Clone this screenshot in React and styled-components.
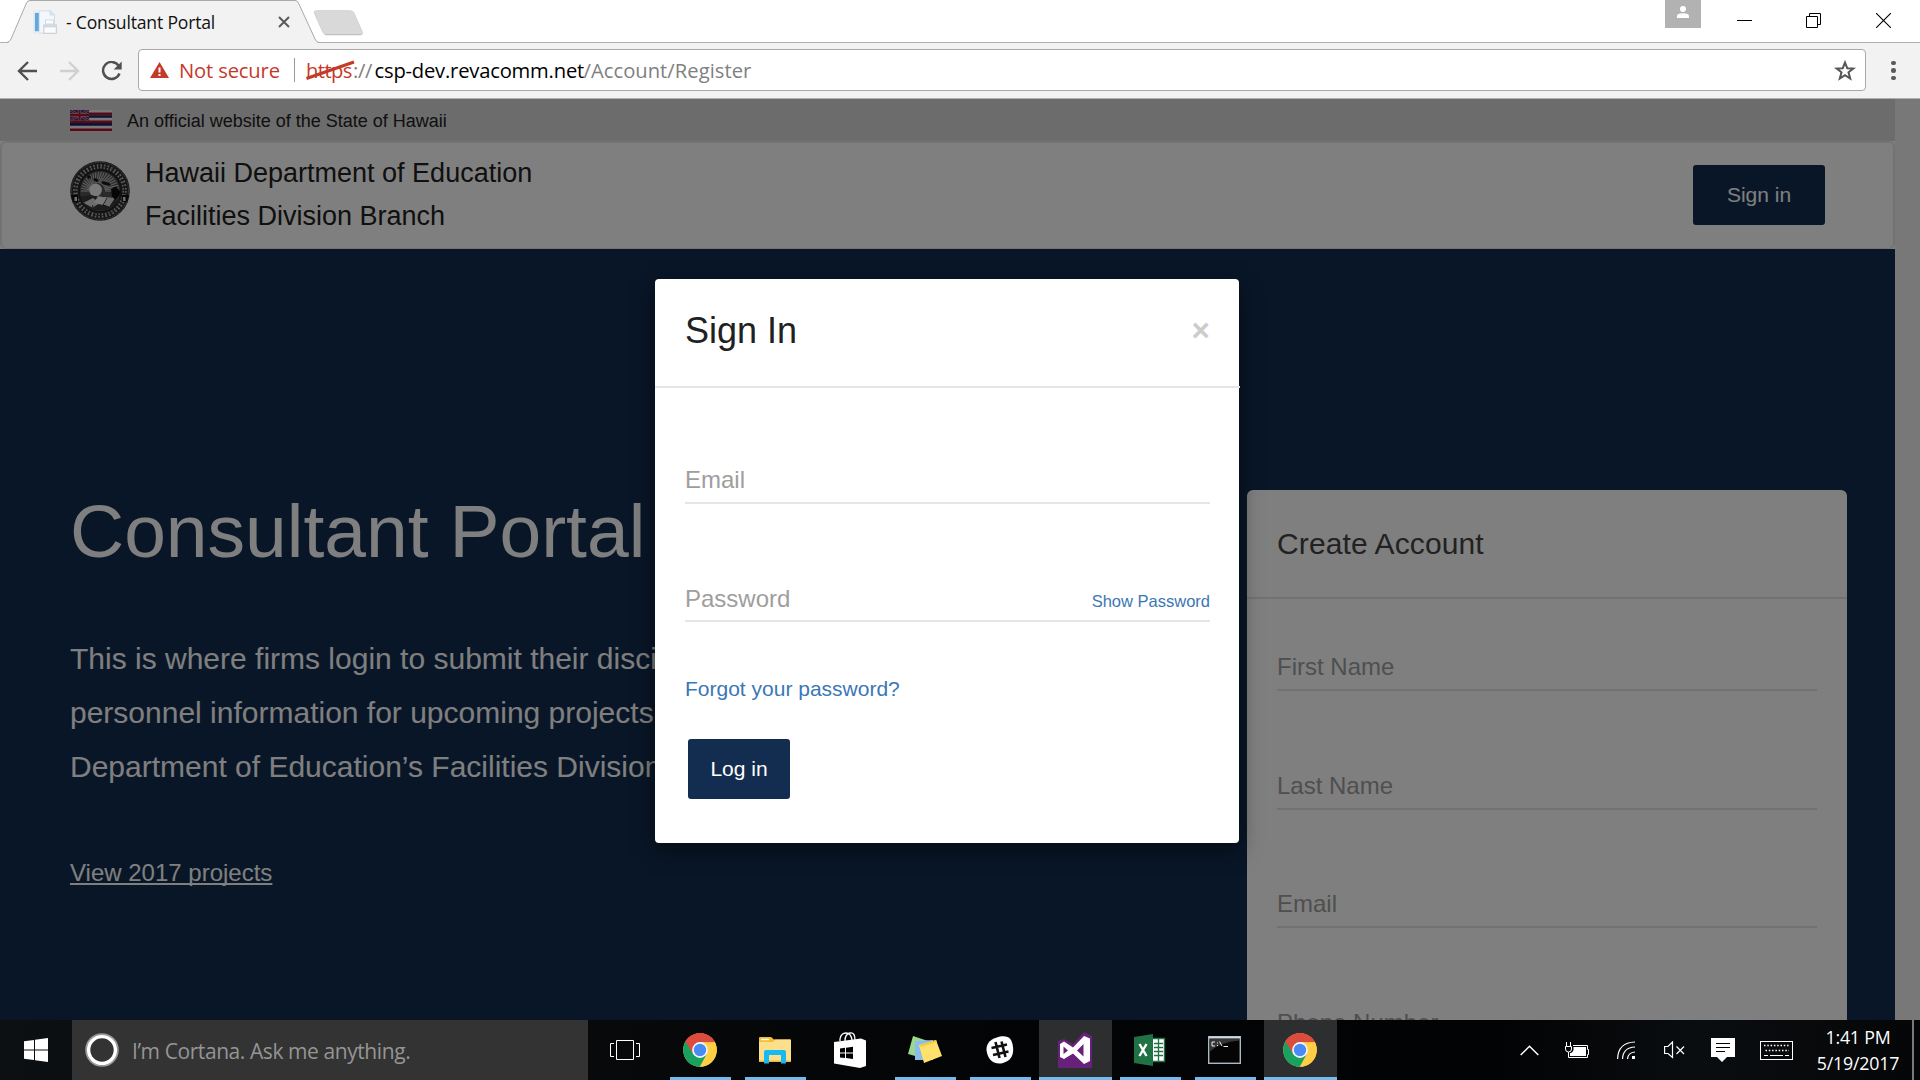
import React from "react";
import styled, { createGlobalStyle } from "styled-components";

const GlobalStyle = createGlobalStyle`
  *, *::before, *::after { box-sizing: border-box; }
  body { margin: 0; background: #000; font-family: "Liberation Sans", Arial, sans-serif; overflow: hidden; }
  h1, h2, h3, p { margin: 0; font-weight: 400; }
  button { font-family: inherit; border: 0; padding: 0; background: none; }
  svg { display: block; flex: none; }
`;

const uiFont = `"Open Sans", "Noto Sans", sans-serif`;

const Screen = styled.div`
  width: 1920px;
  height: 1080px;
  display: flex;
  flex-direction: column;
  overflow: hidden;
`;

/* ---------- browser frame ---------- */
const TabStrip = styled.div`
  height: 43px;
  flex: none;
  display: flex;
  align-items: flex-start;
  background: #fff;
  border-bottom: 1px solid #b0b0b0;
`;
const Tab = styled.div`
  position: relative;
  width: 312px;
  height: 43px;
  margin-left: 7px;
  padding: 1px 29px 0 26px;
  display: flex;
  align-items: center;
`;
const TabShape = styled.svg`
  position: absolute;
  left: 0;
  top: 0;
`;
const TabTitle = styled.span`
  position: relative;
  flex: 1;
  margin-left: 9px;
  font: 17.6px/24px ${uiFont};
  letter-spacing: -0.2px;
  color: #111;
  white-space: nowrap;
`;
const Above = styled.span`
  position: relative;
  display: block;
`;
const NewTab = styled.svg`
  margin: 10px 0 0 -6px;
`;
const WindowButtons = styled.div`
  margin-left: auto;
  height: 42px;
  display: flex;
  align-items: flex-start;
`;
const Profile = styled.div`
  width: 36px;
  height: 28px;
  background: #b2b2b2;
  display: flex;
  justify-content: center;
  padding-top: 6px;
  margin-right: 8px;
`;
const WindowButton = styled.div`
  width: ${(p) => p.$w}px;
  height: 41px;
  display: flex;
  align-items: center;
  justify-content: center;
`;

const Toolbar = styled.div`
  height: 56px;
  flex: none;
  display: flex;
  align-items: center;
  padding: 0 24px 0 17px;
  background: #f2f2f2;
  border-bottom: 1px solid #b0b0b0;
`;
const NavIcons = styled.div`
  width: 121px;
  display: flex;
  gap: 21px;
`;
const Omnibox = styled.div`
  width: 1728px;
  height: 42px;
  margin-top: -1px;
  display: flex;
  align-items: center;
  padding: 0 9px 0 11px;
  background: #fff;
  border: 1px solid #a9a9a9;
  border-radius: 4px;
  font: 20.2px/28px ${uiFont};
  white-space: nowrap;
`;
const NotSecure = styled.span`
  width: 105px;
  margin-left: 10px;
  color: #c53929;
  letter-spacing: -0.15px;
`;
const Separator = styled.span`
  width: 1px;
  height: 24px;
  margin: 0 11px 0 10px;
  background: #9b9b9b;
`;
const Scheme = styled.span`
  position: relative;
  color: #c53929;
  width: 47px;
  letter-spacing: -0.6px;
`;
const Strike = styled.svg`
  position: absolute;
  left: 0;
  top: 3px;
`;
const UrlPart = styled.span`
  color: ${(p) => (p.$strong ? "#000" : "#808080")};
  width: ${(p) => p.$w}px;
  letter-spacing: ${(p) => p.$ls}px;
`;
const StarSlot = styled.span`
  margin-left: auto;
`;
const MenuDots = styled.div`
  margin-left: auto;
  display: flex;
  flex-direction: column;
  gap: 3px;
  span { width: 4.6px; height: 4.6px; border-radius: 50%; background: #5a5a5a; }
`;

/* ---------- page ---------- */
const Viewport = styled.main`
  position: relative;
  height: 921px;
  flex: none;
  display: flex;
  overflow: hidden;
`;
const Page = styled.div`
  width: 1895px;
  display: flex;
  flex-direction: column;
  background: #132d50;
`;
const Scrollbar = styled.div`
  width: 25px;
  background: #f0f0f0;
`;
const OfficialBar = styled.div`
  height: 42px;
  flex: none;
  display: flex;
  align-items: center;
  gap: 15px;
  padding-left: 70px;
  background: #d8d8d8;
  font-size: 18px;
  line-height: 24px;
  color: #212121;
`;
const OfficialText = styled.span`
  padding-top: 2px;
`;
const NavBacking = styled.div`
  height: 108px;
  flex: none;
  background: #fff;
`;
const NavBar = styled.header`
  height: 108px;
  display: flex;
  align-items: center;
  padding: 0 68px 2px;
  background: #fff;
  border: 2px solid #e7e7e7;
  border-bottom-width: 1px;
  border-radius: 6px;
`;
const AgencyName = styled.div`
  margin: 0 0 0 15px;
  font-size: 27px;
  line-height: 43px;
  color: #212121;
  flex: 1;
`;
const Seal = styled.div`
  margin-top: -8px;
`;
const PrimaryButton = styled.button`
  width: ${(p) => p.$w}px;
  height: 60px;
  border-radius: 3px;
  background: #132d50;
  color: #fff;
  font-size: 21px;
`;
const Hero = styled.section`
  flex: 1;
  min-height: 0;
  display: grid;
  grid-template-columns: 1177px 600px;
  padding: 0 0 0 70px;
  overflow: hidden;
  color: #fff;
`;
const Intro = styled.div`
  padding-top: 237px;
  white-space: nowrap;
`;
const HeroTitle = styled.h1`
  font-size: 75px;
  line-height: 90px;
`;
const Lead = styled.p`
  margin-top: 56px;
  font-size: 30px;
  line-height: 54px;
`;
const ProjectsLink = styled.a`
  display: inline-block;
  margin-top: 62px;
  font-size: 24px;
  line-height: 34px;
  text-decoration: underline;
  text-decoration-thickness: 2px;
  text-underline-offset: 2px;
  text-decoration-skip-ink: none;
`;
const Card = styled.div`
  margin-top: 241px;
  height: 620px;
  background: #fff;
  border-radius: 6px;
`;
const CardHeader = styled.div`
  height: 109px;
  display: flex;
  align-items: center;
  padding: 0 30px;
  border-bottom: 2px solid #e5e5e5;
  color: #444;
  font-size: 30px;
  letter-spacing: 0.12px;
`;
const CardFields = styled.div`
  padding: 46px 30px 0;
  display: flex;
  flex-direction: column;
  gap: 72.5px;
`;
const Field = styled.div`
  height: 46px;
  flex: none;
  display: flex;
  align-items: baseline;
  justify-content: space-between;
  border-bottom: 2px solid #e5e5e5;
  font-size: 24px;
  line-height: ${(p) => p.$lh || 44}px;
  color: #9e9e9e;
`;

/* ---------- sign-in dialog ---------- */
const Backdrop = styled.div`
  position: absolute;
  inset: 0;
  background: rgba(0, 0, 0, 0.5);
`;
const Dialog = styled.div`
  position: absolute;
  left: 655px;
  top: 180px;
  width: 584px;
  height: 564px;
  background: #fff;
  border-radius: 4px;
  box-shadow: 0 7px 22px rgba(0, 0, 0, 0.5);
`;
const DialogHeader = styled.div`
  width: 585px;
  height: 109px;
  display: flex;
  align-items: center;
  justify-content: space-between;
  padding: 0 30px 4px 30px;
  border-bottom: 2px solid #e5e5e5;
`;
const DialogTitle = styled.h2`
  font-size: 36px;
  line-height: 44px;
  color: #212121;
`;
const CloseButton = styled.button`
  margin-bottom: 2px;
  font-size: 31.5px;
  line-height: 32px;
  font-weight: 700;
  color: #ccc;
`;
const DialogBody = styled.div`
  padding: 70px 29px 0 30px;
  display: flex;
  flex-direction: column;
  align-items: stretch;
`;
const Gap = styled.div`
  height: ${(p) => p.$h}px;
`;
const TextLink = styled.a`
  color: #3a77b5;
  font-size: ${(p) => p.$size}px;
  line-height: 30px;
`;
const Actions = styled.div`
  padding: 35px 0 0 3px;
`;

/* ---------- taskbar ---------- */
const Taskbar = styled.footer`
  height: 60px;
  flex: none;
  display: flex;
  background: linear-gradient(90deg, #0c1013 0, #07090b 600px, #030405 1000px, #020304 1500px, #0a0d10 1700px, #050607 1920px);
`;
const StartButton = styled.div`
  width: 72px;
  display: flex;
  align-items: center;
  justify-content: center;
`;
const SearchBox = styled.div`
  width: 516px;
  display: flex;
  align-items: center;
  gap: 13px;
  padding-left: 13px;
  background: #333;
  color: #959595;
  font: 21px/28px ${uiFont};
  letter-spacing: -0.42px;
`;
const SearchHint = styled.span`
  padding-top: 2px;
`;
const Apps = styled.div`
  display: grid;
  grid-template-columns: repeat(10, 75px);
`;
const AppSlot = styled.div`
  display: flex;
  align-items: center;
  justify-content: center;
  width: ${(p) => (p.$active ? 73 : 61)}px;
  justify-self: center;
  padding-right: 2px;
  background: ${(p) => (p.$active ? "#2d2e2f" : "transparent")};
  border-top: 3px solid transparent;
  border-bottom: 3px solid ${(p) => (p.$open ? "#76b9ed" : "transparent")};
  border-top-color: ${(p) => (p.$active ? "#2d2e2f" : "transparent")};
`;
const Tray = styled.div`
  margin-left: auto;
  display: flex;
  align-items: center;
`;
const TrayIcon = styled.div`
  width: ${(p) => p.$w}px;
  display: flex;
  justify-content: center;
`;
const Clock = styled.div`
  width: 108px;
  text-align: center;
  color: #fff;
  font: 17.8px/26px ${uiFont};
  letter-spacing: -0.2px;
  padding-bottom: 1px;
`;
const ShowDesktop = styled.div`
  width: 8px;
  height: 60px;
  border-left: 2px solid #77797a;
`;

/* ---------- drawings ---------- */
const Chrome = ({ id }) => (
  <svg width="34" height="34" viewBox="-17 -17 34 34">
    <clipPath id={id}><circle r="16.8" /></clipPath>
    <g clipPath={`url(#${id})`}>
      <rect x="-17" y="-17" width="34" height="34" fill="#ffce44" />
      <path d="M-17-17H17V-7.8H0L-7 4-17-10Z" fill="#dc4b3e" />
      <path d="M-15.5-10.5-6.9 4 0 7.8 6.9 4 0 18H-18V-10Z" fill="#19a15f" />
      <path d="M0-7.8H17V-17H-10L-14.8-9.5-6.9 4Z" fill="#dc4b3e" />
      <path d="M6.9 4-1 18H18V-7.8H0Z" fill="#ffce44" />
    </g>
    <circle r="7.9" fill="#f4f6f8" />
    <circle r="6.2" fill="#4a8af4" />
  </svg>
);

const Flag = () => (
  <svg width="42" height="21" viewBox="0 0 42 21">
    <rect width="42" height="21" fill="#f2f2f2" />
    <path d="M0 3.9H42M0 11.8H42M0 19.7H42" stroke="#b5122f" strokeWidth="2.6" />
    <path d="M0 6.5H42M0 14.4H42" stroke="#1d2468" strokeWidth="2.6" />
    <rect width="19" height="10.5" fill="#303c86" />
    <path d="M0 0 19 10.5M19 0 0 10.5" stroke="#b8b4cc" strokeWidth="2.2" />
    <path d="M0 0 19 10.5M19 0 0 10.5" stroke="#b5122f" strokeWidth="1.1" />
    <path d="M9.5 0V10.5M0 5.2H19" stroke="#cfc4d2" strokeWidth="3.2" />
    <path d="M9.500 0V10.500M0 5.200H19" stroke="#b5122f" strokeWidth="2.200" />
  </svg>
);

const StateSeal = () => (
  <svg width="60" height="60" viewBox="-30 -30 60 60">
    <circle r="29.8" fill="#2e2e2e" />
    <circle r="28.6" fill="none" stroke="#8a8a8a" strokeWidth=".9" strokeDasharray="1.4 1" />
    <circle r="24.6" fill="none" stroke="#b4b4b4" strokeWidth="4.4" strokeDasharray="1.6 1.9" />
    <circle r="24.6" fill="none" stroke="#2e2e2e" strokeWidth="1" strokeDasharray="3 1.7" />
    <circle r="20.8" fill="#555" stroke="#222" strokeWidth="1.4" />
    <g stroke="#bdbdbd" strokeWidth="1.1">
      {Array.from({ length: 22 }, (_, i) => {
        const a = Math.PI * (1 + i / 21);
        return <line key={i} x1={Math.cos(a) * 8 - 3} y1={Math.sin(a) * 8} x2={Math.cos(a) * 19} y2={Math.sin(a) * 19} />;
      })}
    </g>
    <circle cx="-4.500" cy="-1" r="6.400" fill="#f4f4f4" />
    <path d="M-20 6-10 4 0 6 8 7 20 9 14 15 6 19H-8L-15 15Z" fill="#3a3a3a" />
    <path d="M-17 12-7 7 0 12-8 17ZM4 6 15 7 9 16 0 12Z" fill="#d8d8d8" />
    <path d="M-6 12-2 5 7 7 3 14Z" fill="#f2f2f2" />
    <path d="M-17 12-8 17-7 14M9 16 3 14 7 7" fill="none" stroke="#222" strokeWidth=".8" />
    <path d="M11-2 16-4.500 20.500 1 19 5 15 9 12 5Z" fill="#0c0c0c" />
    <circle cx="-11" cy="-14" r="1.800" fill="#151515" />
    <ellipse cx="-4" cy="-11" rx="2.800" ry="1.700" transform="rotate(20 -4 -11)" fill="#191919" />
    <ellipse cx="6" cy="-7.500" rx="5" ry="1.700" transform="rotate(18 6 -7.500)" fill="#191919" />
    <path d="M-29 4H-22V11H-27ZM29 4H22V11H27Z" fill="#101010" />
    <rect x="-25.500" y="6" width="2.500" height="4" fill="#ddd" /><rect x="23" y="6" width="2.500" height="4" fill="#ddd" />
  </svg>
);

const Favicon = () => (
  <svg width="24" height="24" viewBox="0 0 24 24">
    <path d="M6.5 .8H17L21.5 5V23H6.5Z" fill="#f3f6fa" stroke="#d4dce6" />
    <path d="M17 .8V5H21.5Z" fill="#dfe6ef" stroke="#c9d3df" strokeWidth=".6" />
    <rect x=".5" y="1" width="6" height="22" fill="#f5f5f5" stroke="#dde" strokeWidth=".5" />
    <rect x="1.8" y="2.8" width="4" height="18.5" fill="#5fa9dc" />
    <rect x="12.500" y="10" width="8" height="4" fill="#fafbfd" stroke="#d3dbe6" />
    <rect x="10.8" y="15" width="12.5" height="8.3" fill="#fafbfd" stroke="#c2ccd8" />
    <path d="M11 16.4H23" stroke="#cbd5e2" strokeWidth="1.8" />
  </svg>
);

const BrowserFrame = () => (
  <>
    <TabStrip>
      <Tab>
        <TabShape width="312" height="43">
          <path d="M1 43 1.5 42.5Q3 42 4 39L19.5 3Q20.5.5 23 .5H288Q290.500.5 291.500 3L308 39Q309.500 42 311 42.500L311 43Z" fill="#f2f2f2" />
          <path d="M0 42.500Q2.500 42 4 39L19.500 3Q20.500.5 23 .5H288Q290.500.5 291.500 3L308 39Q309.500 42.500 312 42.500" fill="none" stroke="#a9a9a9" />
        </TabShape>
        <Above><Favicon /></Above>
        <TabTitle>- Consultant Portal</TabTitle>
        <Above>
          <svg width="12" height="12" viewBox="0 0 12 12" stroke="#5a5a5a" strokeWidth="2"><path d="M1 1 11 11M11 1 1 11" /></svg>
        </Above>
      </Tab>
      <NewTab width="51" height="26" viewBox="0 0 51 26">
        <path d="M3.500 .7H37Q40 .7 41 3L49.500 22.500Q50.300 24.600 47.500 24.600H13.500Q11 24.600 10 22.500L1.300 3Q.5.7 3.500.7Z" fill="#d9d9d9" stroke="#d2d2d2" />
        <path d="M12 24.700H48" stroke="#bcbcbc" />
      </NewTab>
      <WindowButtons>
        <Profile>
          <svg width="12" height="12" viewBox="0 0 12 12" fill="#fff"><circle cx="6" cy="3" r="3" /><path d="M0 12V10Q0 7.300 6 7.300T12 10V12Z" /></svg>
        </Profile>
        <WindowButton $w={71}><svg width="15" height="15"><path d="M0 7.500H15" stroke="#000" /></svg></WindowButton>
        <WindowButton $w={67}><svg width="15" height="15" fill="none" stroke="#000"><path d="M.5 3.500H11.500V14.500H.5ZM3.500 3.500V.5H14.500V11.500H11.500" /></svg></WindowButton>
        <WindowButton $w={73}><svg width="15" height="15" stroke="#000" strokeWidth="1.100"><path d="M0 0 15 15M15 0 0 15" /></svg></WindowButton>
      </WindowButtons>
    </TabStrip>
    <Toolbar>
      <NavIcons>
        <svg width="21" height="20" viewBox="0 0 21 20" fill="none" stroke="#505050" strokeWidth="2.400"><path d="M20 10H2M11 1 2 10 11 19" /></svg>
        <svg width="21" height="20" viewBox="0 0 21 20" fill="none" stroke="#d0d0d0" strokeWidth="2.400"><path d="M1 10H19M10 1 19 10 10 19" /></svg>
        <svg width="21" height="20" viewBox="0 0 21 20" fill="none" stroke="#505050" strokeWidth="2.400"><path d="M17.500 4.500A8.500 8.500 0 1 0 18.500 12.500" /><path d="M20.700 .5V8.500H12.700Z" fill="#505050" stroke="none" /></svg>
      </NavIcons>
      <Omnibox>
        <svg width="19" height="16" viewBox="0 0 19 16"><path d="M9.500 0 19 16H0Z" fill="#c53929" /><path d="M9.500 5.500V10.500M9.500 12V14" stroke="#fff" strokeWidth="2" /></svg>
        <NotSecure>Not secure</NotSecure>
        <Separator />
        <Scheme>https<Strike width="49" height="22"><path d="M.5 19.500 48 3" stroke="#c53929" strokeWidth="3" /></Strike></Scheme>
        <UrlPart $w={21.5} $ls={-0.4}>://</UrlPart>
        <UrlPart $strong $w={209} $ls={-0.2}>csp-dev.revacomm.net</UrlPart>
        <UrlPart $w={170} $ls={0.03}>/Account/Register</UrlPart>
        <StarSlot>
          <svg width="22" height="21" viewBox="0 0 22 21" fill="none" stroke="#555" strokeWidth="2"><path d="M11 2.500 13.200 8.200 19.300 8.500 14.500 12.300 16.200 18.600 11 15.200 5.800 18.600 7.500 12.300 2.700 8.500 8.800 8.200Z" /></svg>
        </StarSlot>
      </Omnibox>
      <MenuDots><span /><span /><span /></MenuDots>
    </Toolbar>
  </>
);

const SignInDialog = () => (
  <Dialog role="dialog">
    <DialogHeader>
      <DialogTitle>Sign In</DialogTitle>
      <CloseButton>×</CloseButton>
    </DialogHeader>
    <DialogBody>
      <Field>Email</Field>
      <Gap $h={72} />
      <Field $lh={46}>Password<TextLink $size={16.5}>Show Password</TextLink></Field>
      <Gap $h={52} />
      <TextLink $size={21}>Forgot your password?</TextLink>
      <Actions><PrimaryButton $w={102}>Log in</PrimaryButton></Actions>
    </DialogBody>
  </Dialog>
);

const Site = () => (
  <Viewport>
    <Page>
      <OfficialBar><Flag /><OfficialText>An official website of the State of Hawaii</OfficialText></OfficialBar>
      <NavBacking>
        <NavBar>
          <Seal><StateSeal /></Seal>
          <AgencyName>Hawaii Department of Education<br />Facilities Division Branch</AgencyName>
          <PrimaryButton $w={132}>Sign in</PrimaryButton>
        </NavBar>
      </NavBacking>
      <Hero>
        <Intro>
          <HeroTitle>Consultant Portal</HeroTitle>
          <Lead>
            This is where firms login to submit their disciplines and<br />
            personnel information for upcoming projects<br />
            Department of Education’s Facilities Division
          </Lead>
          <ProjectsLink>View 2017 projects</ProjectsLink>
        </Intro>
        <Card>
          <CardHeader>Create Account</CardHeader>
          <CardFields>
            {["First Name", "Last Name", "Email", "Phone Number"].map((label) => (
              <Field key={label}>{label}</Field>
            ))}
          </CardFields>
        </Card>
      </Hero>
    </Page>
    <Scrollbar />
    <Backdrop />
    <SignInDialog />
  </Viewport>
);

const apps = [
  { name: "taskview", icon: (
    <svg width="30" height="20" fill="none" stroke="#fff"><path d="M6.500 .5H23.500V19.500H6.500ZM4 3.500H.5V16.500H4M26 3.500H29.500V16.500H26" /></svg>
  ) },
  { name: "chrome", open: true, icon: <Chrome id="chrome-a" /> },
  { name: "explorer", open: true, icon: (
    <svg width="32" height="27" viewBox="0 0 32 27">
      <path d="M0 1Q0 0 1 0H12L15 2.500H31V7H0Z" fill="#f5bd30" /><path d="M2 2.500H10" stroke="#fff" strokeWidth="1.400" />
      <path d="M0 5H14L16 2.500H32V25H0Z" fill="#fbdf8b" /><path d="M0 23.500H32V25H0Z" fill="#e8b93c" />
      <path d="M5 26.500V15Q5 13 7 13H25Q27 13 27 15V26.500H22V18H10V26.500Z" fill="#18b9f0" />
    </svg>
  ) },
  { name: "store", icon: (
    <svg width="32" height="36" viewBox="0 0 32 36">
      <path d="M6 9V7Q7 1 12 1T18 8M11 9Q11 2 16 1T21 8" fill="none" stroke="#fff" strokeWidth="1.300" />
      <path d="M0 10 27 6.500 32 8.500V34L26 36 0 31.500Z" fill="#fff" />
      <path d="M6 16.500 11 15.800V20.500H6ZM12 15.700 19 14.700V20.500H12ZM6 21.500H11V26L6 25.500ZM12 21.500H19V27L12 26.100Z" fill="#000" />
    </svg>
  ) },
  { name: "notes", open: true, icon: (
    <svg width="34" height="28" viewBox="0 0 34 28">
      <path d="M5 0 23 6 18 23 0 18Z" fill="#9ad98b" /><path d="M7 5 25 4V24H7Z" fill="#8cbcec" />
      <path d="M11 9 28 4 34 20 16 27Z" fill="#ffe16b" /><path d="M12 9 28 4 29 6 12.500 11Z" fill="#f6cc35" />
    </svg>
  ) },
  { name: "slack", open: true, icon: (
    <svg width="28" height="28" viewBox="0 0 28 28">
      <path d="M14 .5C23 -1 26 3 27 11S25 25 17 27 3 25 1 17 3 3 14 .5Z" fill="#fff" />
      <path d="M9.500 6 13.500 22M15.500 5.500 19.500 21M5.500 12 21 8.500M7 19 22.500 15.500" stroke="#111" strokeWidth="2.600" />
    </svg>
  ) },
  { name: "studio", open: true, active: true, icon: (
    <svg width="34" height="36" viewBox="0 0 34 36">
      <path d="M0 9 6 7 15 12 26 0 34 4V36H0Z" fill="#68217a" />
      <path fillRule="evenodd" d="M2 12 6 9.500 15 15.500 26 4 32 6.500V29L26 32 15 21.500 6 27 2 25ZM5.500 14.500V22L10 18.500ZM25.500 12 19 18.500 25.500 24.500Z" fill="#fff" />
    </svg>
  ) },
  { name: "excel", open: true, icon: (
    <svg width="32" height="32" viewBox="0 0 32 32">
      <path d="M18 4.500H30.500V27.500H18Z" fill="#fff" stroke="#207245" strokeWidth="1.400" />
      <path d="M24.500 5V27M20 9.500H29M20 13.500H29M20 17.500H29M20 21.500H29" stroke="#207245" strokeWidth="1.300" />
      <path d="M0 3 19 0V32L0 29Z" fill="#207245" />
      <path d="M5.500 10 12.500 22M12.500 10 5.500 22" stroke="#fff" strokeWidth="2.400" />
    </svg>
  ) },
  { name: "terminal", open: true, icon: (
    <svg width="33" height="28" viewBox="0 0 33 28">
      <rect x=".7" y=".7" width="31.600" height="26.600" fill="#050505" stroke="#aeb8c0" strokeWidth="1.400" />
      <path d="M1 3H32V4.500Q12 6 1.400 16Z" fill="#4a4a4a" opacity=".7" /><path d="M1 1.500H32" stroke="#cdd8e2" strokeWidth="2" />
      <path d="M7 6H4V10H7M9.500 6.500V7.500M9.500 9V10M11.500 5.500 14 10M15.500 10.500H20" fill="none" stroke="#eee" />
    </svg>
  ) },
  { name: "chrome-active", open: true, active: true, icon: <Chrome id="chrome-b" /> },
];

const WindowsTaskbar = () => (
  <Taskbar>
    <StartButton>
      <svg width="24" height="24" viewBox="0 0 24 24" fill="#fff"><path d="M0 3.300 10 2V11.400H0ZM11 1.800 24 0V11.400H11ZM0 12.500H10V22L0 20.700ZM11 12.500H24V24L11 22.200Z" /></svg>
    </StartButton>
    <SearchBox>
      <svg width="34" height="34" viewBox="-17 -17 34 34" fill="none"><circle r="15.800" stroke="#999" strokeWidth="2" /><circle r="13.400" stroke="#fff" strokeWidth="3.400" /></svg>
      <SearchHint>I’m Cortana. Ask me anything.</SearchHint>
    </SearchBox>
    <Apps>
      {apps.map((a) => <AppSlot key={a.name} $open={a.open} $active={a.active}>{a.icon}</AppSlot>)}
    </Apps>
    <Tray>
      <TrayIcon $w={48}><svg width="19" height="11" fill="none" stroke="#fff" strokeWidth="1.500"><path d="M.7 10 9.500 1.200 18.300 10" /></svg></TrayIcon>
      <TrayIcon $w={48}>
        <svg width="24" height="17" viewBox="0 0 24 17" fill="none" stroke="#fff"><path d="M1.500 0V4M5.500 0V4M.5 4.500H6.500V7Q6.500 10 3.500 10T.5 7ZM3.500 10V15.500H22.500V12.500H23.500V7.500H22.500V3.500H8" /><path d="M6 11H5V14H21V5H8.500V8Q8 10 6 11Z" fill="#fff" stroke="none" /></svg>
      </TrayIcon>
      <TrayIcon $w={50}>
        <svg width="19" height="19" viewBox="0 0 19 19" fill="none" stroke="#fff" strokeWidth="1.200"><path d="M.6 18Q1 1.500 18 1M5.500 18Q6 6.500 18 6M10.500 18Q11 11.500 18 11" /><rect x="15" y="15" width="3" height="3" fill="#fff" stroke="none" /></svg>
      </TrayIcon>
      <TrayIcon $w={46}>
        <svg width="21" height="18" viewBox="0 0 21 18" fill="none" stroke="#fff" strokeWidth="1.200"><path d="M.6 5.500H4L8.500 1V16.500L4 12.500H.6ZM12.500 5.500 20 13M20 5.500 12.500 13" /></svg>
      </TrayIcon>
      <TrayIcon $w={51}>
        <svg width="24" height="24" viewBox="0 0 24 24"><path d="M0 0H24V19H16L11 24 6 19H0Z" fill="#fff" /><path d="M5 5.500H19M5 9.500H19M5 13.500H14" stroke="#000" /></svg>
      </TrayIcon>
      <TrayIcon $w={56}>
        <svg width="33" height="19" viewBox="0 0 33 19" fill="none" stroke="#fff"><rect x=".5" y=".5" width="32" height="18" /><path d="M4 4.500H30M5.500 9.500H29" strokeDasharray="1.500 1.800" strokeWidth="1.300" /><path d="M4 14.500H8M10 14.500H23M25 14.500H29" /></svg>
      </TrayIcon>
      <Clock>1:41 PM<br />5/19/2017</Clock>
      <ShowDesktop />
    </Tray>
  </Taskbar>
);

export default function App() {
  return (
    <Screen>
      <GlobalStyle />
      <BrowserFrame />
      <Site />
      <WindowsTaskbar />
    </Screen>
  );
}
